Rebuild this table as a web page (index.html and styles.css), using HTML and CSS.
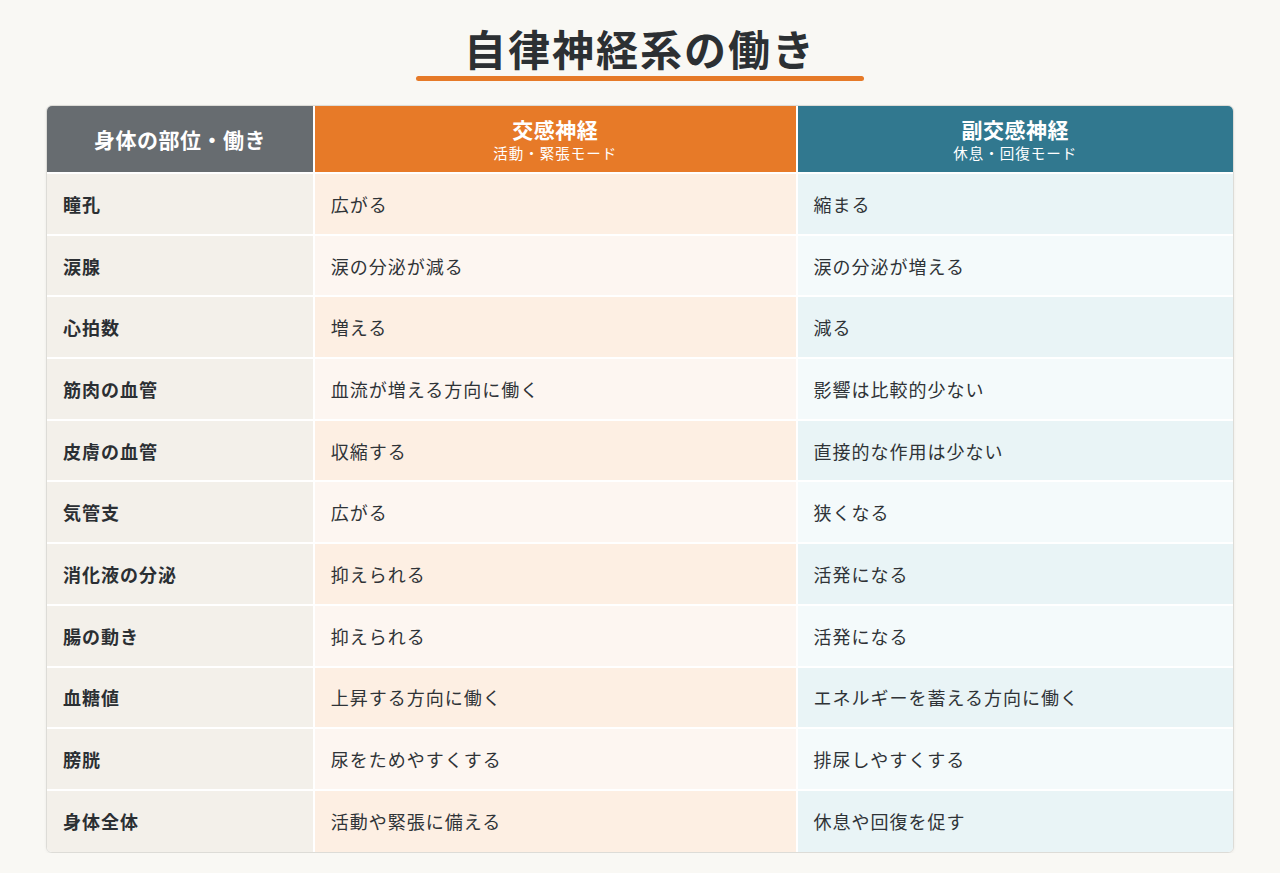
FILE: index.html
```html
<!DOCTYPE html>
<html lang="ja">
<head>
<meta charset="utf-8">
<title>自律神経系の働き</title>
<link rel="stylesheet" href="styles.css">
</head>
<body>
<main class="page">
  <h1 class="title">自律神経系の働き</h1>
  <div class="title-bar"></div>
  <div class="table-wrap">
    <table class="nerve-table">
      <colgroup>
        <col class="col-part">
        <col class="col-sym">
        <col class="col-para">
      </colgroup>
      <thead>
        <tr>
          <th class="h-part">身体の部位・働き</th>
          <th class="h-sym"><span class="h-main">交感神経</span><span class="h-sub">活動・緊張モード</span></th>
          <th class="h-para"><span class="h-main">副交感神経</span><span class="h-sub">休息・回復モード</span></th>
        </tr>
      </thead>
      <tbody>
        <tr><td class="part">瞳孔</td><td class="sym">広がる</td><td class="para">縮まる</td></tr>
        <tr><td class="part">涙腺</td><td class="sym">涙の分泌が減る</td><td class="para">涙の分泌が増える</td></tr>
        <tr><td class="part">心拍数</td><td class="sym">増える</td><td class="para">減る</td></tr>
        <tr><td class="part">筋肉の血管</td><td class="sym">血流が増える方向に働く</td><td class="para">影響は比較的少ない</td></tr>
        <tr><td class="part">皮膚の血管</td><td class="sym">収縮する</td><td class="para">直接的な作用は少ない</td></tr>
        <tr><td class="part">気管支</td><td class="sym">広がる</td><td class="para">狭くなる</td></tr>
        <tr><td class="part">消化液の分泌</td><td class="sym">抑えられる</td><td class="para">活発になる</td></tr>
        <tr><td class="part">腸の動き</td><td class="sym">抑えられる</td><td class="para">活発になる</td></tr>
        <tr><td class="part">血糖値</td><td class="sym">上昇する方向に働く</td><td class="para">エネルギーを蓄える方向に働く</td></tr>
        <tr><td class="part">膀胱</td><td class="sym">尿をためやすくする</td><td class="para">排尿しやすくする</td></tr>
        <tr><td class="part">身体全体</td><td class="sym">活動や緊張に備える</td><td class="para">休息や回復を促す</td></tr>
      </tbody>
    </table>
  </div>
</main>
</body>
</html>
```
FILE: styles.css
```css
html, body {
  margin: 0;
  padding: 0;
  background: #f9f8f4;
}

body {
  font-family: "Noto Sans CJK JP", "Noto Sans", sans-serif;
  color: #2f3337;
}

.page {
  width: 1188px;
  margin: 0 auto;
  padding-top: 20px;
  display: flex;
  flex-direction: column;
  align-items: center;
}

.title {
  margin: 0;
  font-size: 42px;
  line-height: 56px;
  font-weight: 700;
  letter-spacing: 2px;
  color: #2c3033;
}

.title-bar {
  width: 448px;
  height: 5px;
  border-radius: 3px;
  background: #e67a28;
  margin-top: 0;
}

.table-wrap {
  align-self: stretch;
  margin-top: 24px;
  border: 1px solid #dddcd7;
  border-radius: 6px;
  overflow: hidden;
  box-shadow: 0 1px 3px rgba(0, 0, 0, 0.06);
  background: #fff;
}

.nerve-table {
  width: 100%;
  border-collapse: collapse;
  table-layout: fixed;
}

.col-part { width: 22.5%; }
.col-sym { width: 40.7%; }

.nerve-table th,
.nerve-table td {
  border: 2px solid #ffffff;
}

.nerve-table tr:first-child th { border-top: 0; }
.nerve-table tr:last-child td { border-bottom: 0; }
.nerve-table th:first-child, .nerve-table td:first-child { border-left: 0; }
.nerve-table th:last-child, .nerve-table td:last-child { border-right: 0; }

.nerve-table th {
  height: 66px;
  padding: 0 16px;
  color: #ffffff;
  font-weight: 700;
  text-align: center;
  vertical-align: middle;
}

.h-part {
  background: #676c70;
  font-size: 21px;
  letter-spacing: 0.5px;
}

.h-sym { background: #e77a28; }
.h-para { background: #31788f; }

.h-main {
  display: block;
  font-size: 21px;
  line-height: 28px;
  letter-spacing: 0.5px;
}

.h-sub {
  display: block;
  font-size: 14.5px;
  line-height: 20px;
  font-weight: 400;
  letter-spacing: 1px;
}

.nerve-table td {
  height: 61.7px;
  padding: 0 16px;
  font-size: 18px;
  letter-spacing: 1px;
  vertical-align: middle;
  box-sizing: border-box;
}

.part {
  background: #f3f0ea;
  font-weight: 700;
  color: #2b2f33;
}

.sym { background: #fdefe3; }
.para { background: #e9f4f6; }

tbody tr:nth-child(even) .sym { background: #fdf6f1; }
tbody tr:nth-child(even) .para { background: #f4fafb; }
```
